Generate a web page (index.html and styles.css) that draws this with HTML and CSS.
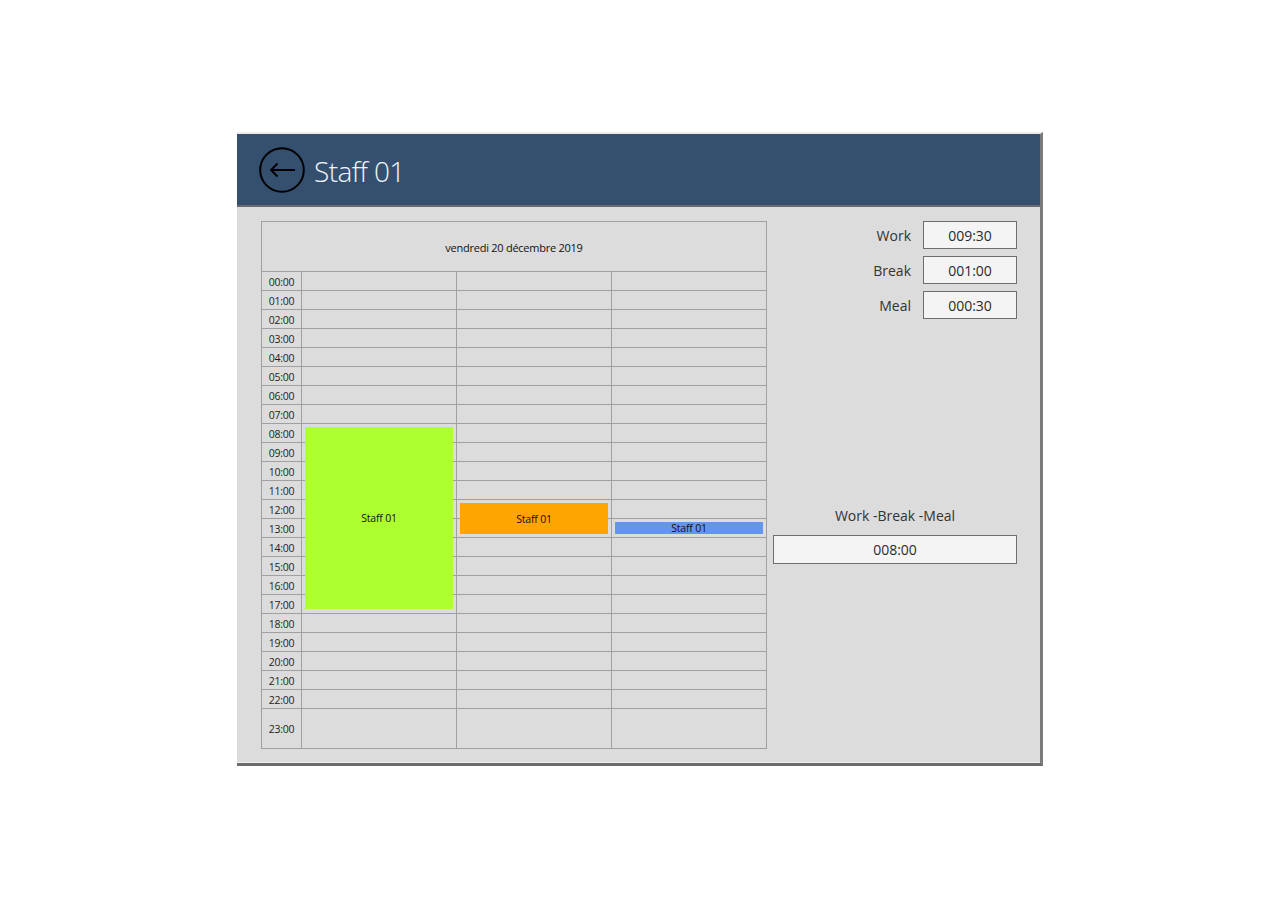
FILE: index.html
```html
<!DOCTYPE html>
<html lang="fr">
<head>
<meta charset="utf-8">
<title>Staff 01</title>
<link rel="stylesheet" href="styles.css">
</head>
<body>
<div class="window">
  <header class="header">
    <button class="back" aria-label="Retour">
      <svg width="46" height="46" viewBox="0 0 46 46">
        <circle cx="23" cy="23" r="21.8" fill="none" stroke="#000" stroke-width="2"/>
        <path d="M12 23 H36 M18.5 16.5 L12 23 L18.5 29.5" fill="none" stroke="#000" stroke-width="2"/>
      </svg>
    </button>
    <h1 class="title">Staff 01</h1>
  </header>
  <main class="content">
    <section class="calendar">
      <div class="cal-grid">
        <div class="cal-head">vendredi 20 décembre 2019</div>
        <div class="t">00:00</div><div class="c"></div><div class="c"></div><div class="c"></div>
        <div class="t">01:00</div><div class="c"></div><div class="c"></div><div class="c"></div>
        <div class="t">02:00</div><div class="c"></div><div class="c"></div><div class="c"></div>
        <div class="t">03:00</div><div class="c"></div><div class="c"></div><div class="c"></div>
        <div class="t">04:00</div><div class="c"></div><div class="c"></div><div class="c"></div>
        <div class="t">05:00</div><div class="c"></div><div class="c"></div><div class="c"></div>
        <div class="t">06:00</div><div class="c"></div><div class="c"></div><div class="c"></div>
        <div class="t">07:00</div><div class="c"></div><div class="c"></div><div class="c"></div>
        <div class="t">08:00</div><div class="c"></div><div class="c"></div><div class="c"></div>
        <div class="t">09:00</div><div class="c"></div><div class="c"></div><div class="c"></div>
        <div class="t">10:00</div><div class="c"></div><div class="c"></div><div class="c"></div>
        <div class="t">11:00</div><div class="c"></div><div class="c"></div><div class="c"></div>
        <div class="t">12:00</div><div class="c"></div><div class="c"></div><div class="c"></div>
        <div class="t">13:00</div><div class="c"></div><div class="c"></div><div class="c"></div>
        <div class="t">14:00</div><div class="c"></div><div class="c"></div><div class="c"></div>
        <div class="t">15:00</div><div class="c"></div><div class="c"></div><div class="c"></div>
        <div class="t">16:00</div><div class="c"></div><div class="c"></div><div class="c"></div>
        <div class="t">17:00</div><div class="c"></div><div class="c"></div><div class="c"></div>
        <div class="t">18:00</div><div class="c"></div><div class="c"></div><div class="c"></div>
        <div class="t">19:00</div><div class="c"></div><div class="c"></div><div class="c"></div>
        <div class="t">20:00</div><div class="c"></div><div class="c"></div><div class="c"></div>
        <div class="t">21:00</div><div class="c"></div><div class="c"></div><div class="c"></div>
        <div class="t">22:00</div><div class="c"></div><div class="c"></div><div class="c"></div>
        <div class="t">23:00</div><div class="c"></div><div class="c"></div><div class="c"></div>
      </div>
      <div class="event ev-work" style="left:44px;top:206px;width:148px;height:182px">Staff 01</div>
      <div class="event ev-break" style="left:199px;top:282px;width:148px;height:31px">Staff 01</div>
      <div class="event ev-meal" style="left:354px;top:301px;width:148px;height:12px">Staff 01</div>
    </section>
    <aside class="panel">
      <div class="row"><span class="lbl">Work</span><div class="box">009:30</div></div>
      <div class="row"><span class="lbl">Break</span><div class="box">001:00</div></div>
      <div class="row"><span class="lbl">Meal</span><div class="box">000:30</div></div>
      <div class="total-lbl">Work -Break -Meal</div>
      <div class="box total">008:00</div>
    </aside>
  </main>
</div>
</body>
</html>
```
FILE: styles.css
```css
html, body {
  margin: 0;
  padding: 0;
  background: #ffffff;
  font-family: "Open Sans", "Noto Sans", sans-serif;
}

.window {
  margin: 132px 0 0 237px;
  width: 803px;
  border-top: 2px solid #ececec;
  border-right: 3px solid #7c7c7c;
  border-bottom: 3px solid #6c6c6c;
}

.header {
  height: 71px;
  background: #35506f;
  border-bottom: 2px solid #6b6b6b;
  display: flex;
  align-items: center;
  padding-left: 22px;
  gap: 9px;
}

.back {
  width: 46px;
  height: 46px;
  padding: 0;
  margin: 0;
  border: 0;
  background: transparent;
  display: block;
}
.back svg { display: block; }

.title {
  margin: 3px 0 0 0;
  font-size: 28px;
  font-weight: 300;
  color: #f2f4f7;
  letter-spacing: -0.6px;
  line-height: 1;
}

.content {
  background: #dcdcdc;
  height: 541px;
  padding: 14px 23px 0 24px;
  display: flex;
  gap: 6px;
  border-bottom: 1px solid #f0f0f0;
}

.calendar {
  position: relative;
  width: 506px;
  height: 528px;
}

.cal-grid {
  display: grid;
  grid-template-columns: 39px 154px 154px 154px;
  grid-template-rows: 49px repeat(23, 18px) 39px;
  gap: 1px;
  padding: 1px;
  background: #a0a0a0;
}

.cal-grid > div { background: #dcdcdc; }

.cal-head {
  grid-column: 1 / -1;
  display: flex;
  align-items: center;
  justify-content: center;
  font-size: 11px;
  color: #111;
  letter-spacing: -0.25px;
  padding-top: 1px;
}

.t {
  display: flex;
  align-items: center;
  justify-content: center;
  font-size: 10.5px;
  color: #1f1f1f;
  letter-spacing: -0.3px;
  padding-top: 1px;
}

.event {
  position: absolute;
  display: flex;
  align-items: center;
  justify-content: center;
  font-size: 10.5px;
  color: #111;
  letter-spacing: -0.2px;
  white-space: nowrap;
  line-height: 1;
  padding-top: 1px;
  box-sizing: border-box;
}
.ev-work { background: #adff2f; }
.ev-break { background: #ffa500; }
.ev-meal { background: #6495ed; }

.panel {
  flex: 1;
  display: flex;
  flex-direction: column;
  color: #333;
}

.row {
  display: flex;
  justify-content: flex-end;
  align-items: center;
  gap: 12px;
  margin-bottom: 7px;
}

.lbl {
  font-size: 14px;
  color: #333;
}

.box {
  box-sizing: border-box;
  width: 94px;
  height: 28px;
  border: 1px solid #6e6e6e;
  background: #f4f4f4;
  display: flex;
  align-items: center;
  justify-content: center;
  font-size: 14px;
  color: #2b2b2b;
}

.total-lbl {
  margin-top: 180px;
  height: 20px;
  line-height: 20px;
  text-align: center;
  font-size: 14px;
  color: #333;
}

.box.total {
  width: 100%;
  height: 29px;
  margin-top: 9px;
}
```
